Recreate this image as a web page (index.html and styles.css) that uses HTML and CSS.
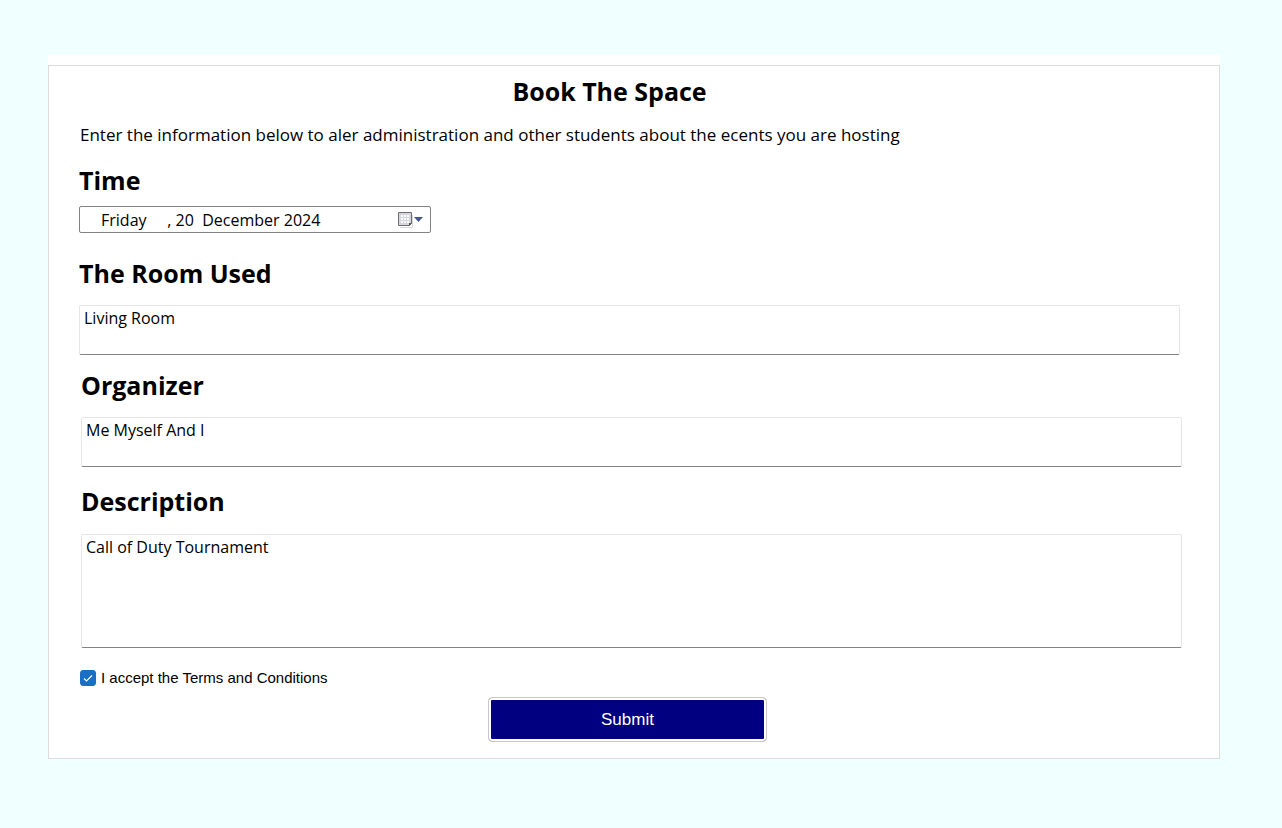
FILE: index.html
```html
<!DOCTYPE html>
<html lang="en">
<head>
<meta charset="utf-8">
<meta name="viewport" content="width=device-width, initial-scale=1">
<title>Book The Space</title>
<link rel="stylesheet" href="styles.css">
</head>
<body>
<main class="sheet">
  <form class="card">
    <h1 class="title">Book The Space</h1>
    <p class="intro">Enter the information below to aler administration and other students about the ecents you are hosting</p>

    <div class="field field-date">
      <label class="heading" for="date">Time</label>
      <div class="date">
        <input class="date-text" id="date" type="text" value="Friday     , 20  December 2024">
        <button class="date-open" type="button" aria-label="Open calendar">
          <svg width="26" height="18" viewBox="0 0 26 18">
            <path d="M3 16.500h12.500V4" fill="none" stroke="#d8d8d8"/>
            <path d="M1.500 1.500h13v11l-2 2h-11z" fill="#d3d7e2" stroke="#746b6b"/>
            <path d="M4 4h2v2h-2zM7 4h2v2h-2zM10 4h2v2h-2zM4 7h2v2h-2zM7 7h2v2h-2zM10 7h2v2h-2zM4 10h2v2h-2zM7 10h2v2h-2zM10 10h2v2h-2z" fill="#fff"/>
            <path d="M12 15v-3h3z" fill="#5c5656"/>
            <path d="M17 6h9l-4.500 5z" fill="#43598c"/>
          </svg>
        </button>
      </div>
    </div>

    <div class="field field-room">
      <label class="heading" for="room">The Room Used</label>
      <textarea class="box" id="room">Living Room</textarea>
    </div>

    <div class="field field-organizer">
      <label class="heading" for="organizer">Organizer</label>
      <textarea class="box" id="organizer">Me Myself And I</textarea>
    </div>

    <div class="field field-description">
      <label class="heading" for="description">Description</label>
      <textarea class="box box-tall" id="description">Call of Duty Tournament</textarea>
    </div>

    <div class="terms">
      <span class="tick">
        <input class="tick-input" id="terms" type="checkbox" checked>
        <svg class="tick-mark" width="16" height="16" viewBox="0 0 16 16"><path d="M4 8.500l2.500 2.500L12 5.500" fill="none" stroke="#fff" stroke-width="1.100"/></svg>
      </span>
      <label for="terms">I accept the Terms and Conditions</label>
    </div>

    <button class="submit" type="submit">Submit</button>
  </form>
</main>
</body>
</html>
```
FILE: styles.css
```css
* {
  box-sizing: border-box;
}

body {
  margin: 0;
  padding: 55px 62px 69px 48px;
  background: #f0ffff;
  color: #000;
  font-family: "Segoe UI", "Open Sans", "Noto Sans", sans-serif;
}

.sheet {
  padding-top: 10px;
  background: #fff;
}

.card {
  display: flex;
  flex-direction: column;
  padding: 10px 37px 16px 30px;
  border: 1px solid #dcdcdc;
}

.title,
.heading {
  margin: 0;
  font-size: 25px;
  line-height: 30px;
  font-weight: 700;
}

.title {
  padding-right: 42px;
  text-align: center;
}

.intro {
  margin: 17px 0 18px;
  padding-left: 1px;
  font-size: 17px;
  line-height: 24px;
}

.field {
  display: flex;
  flex-direction: column;
  gap: 17px;
}

.field-date {
  gap: 11px;
  margin-bottom: 25px;
}

.field-room {
  margin: 0 2px 15px 0;
}

.field-organizer {
  margin: 0 0 19px 2px;
}

.field-description {
  gap: 18px;
  margin: 0 0 20px 2px;
}

.date {
  display: flex;
  align-items: center;
  width: 352px;
  height: 27px;
  padding: 0 7px 0 21px;
  border: 1px solid #838383;
  border-radius: 2px;
}

.date-text {
  flex: 1;
  min-width: 0;
  padding: 0;
  border: 0;
  background: none;
  font: inherit;
  font-size: 16px;
  line-height: 24px;
  white-space: pre;
  outline: none;
}

.date-open {
  display: flex;
  padding: 0;
  border: 0;
  background: none;
}

.box {
  display: block;
  width: 100%;
  height: 50px;
  padding: 2px 4px;
  border: 1px solid #e6e6e6;
  border-bottom-color: #838383;
  border-radius: 2px;
  background: #fff;
  color: #000;
  font: inherit;
  font-size: 16px;
  line-height: 20px;
  resize: none;
  outline: none;
}

.box-tall {
  height: 114px;
}

.terms {
  display: flex;
  align-items: center;
  gap: 5px;
  padding-left: 1px;
  margin-bottom: 9px;
  font-family: "Liberation Sans", Arial, sans-serif;
  font-size: 15px;
  line-height: 20px;
}

.tick {
  display: grid;
}

.tick-input,
.tick-mark {
  grid-area: 1 / 1;
}

.tick-input {
  appearance: none;
  width: 16px;
  height: 16px;
  margin: 0;
  border: 1px solid #1a6fc4;
  border-radius: 3px;
}

.tick-input:checked {
  background: #1a6fc4;
}

.tick-mark {
  pointer-events: none;
}

.submit {
  align-self: center;
  width: 279px;
  height: 45px;
  margin-right: 6px;
  padding: 0;
  border: 1px solid #c8c8c8;
  border-radius: 4px;
  background: #000080 padding-box;
  box-shadow: inset 0 0 0 2px #fff;
  color: #fff;
  font-family: "Liberation Sans", Arial, sans-serif;
  font-size: 17px;
}
```
